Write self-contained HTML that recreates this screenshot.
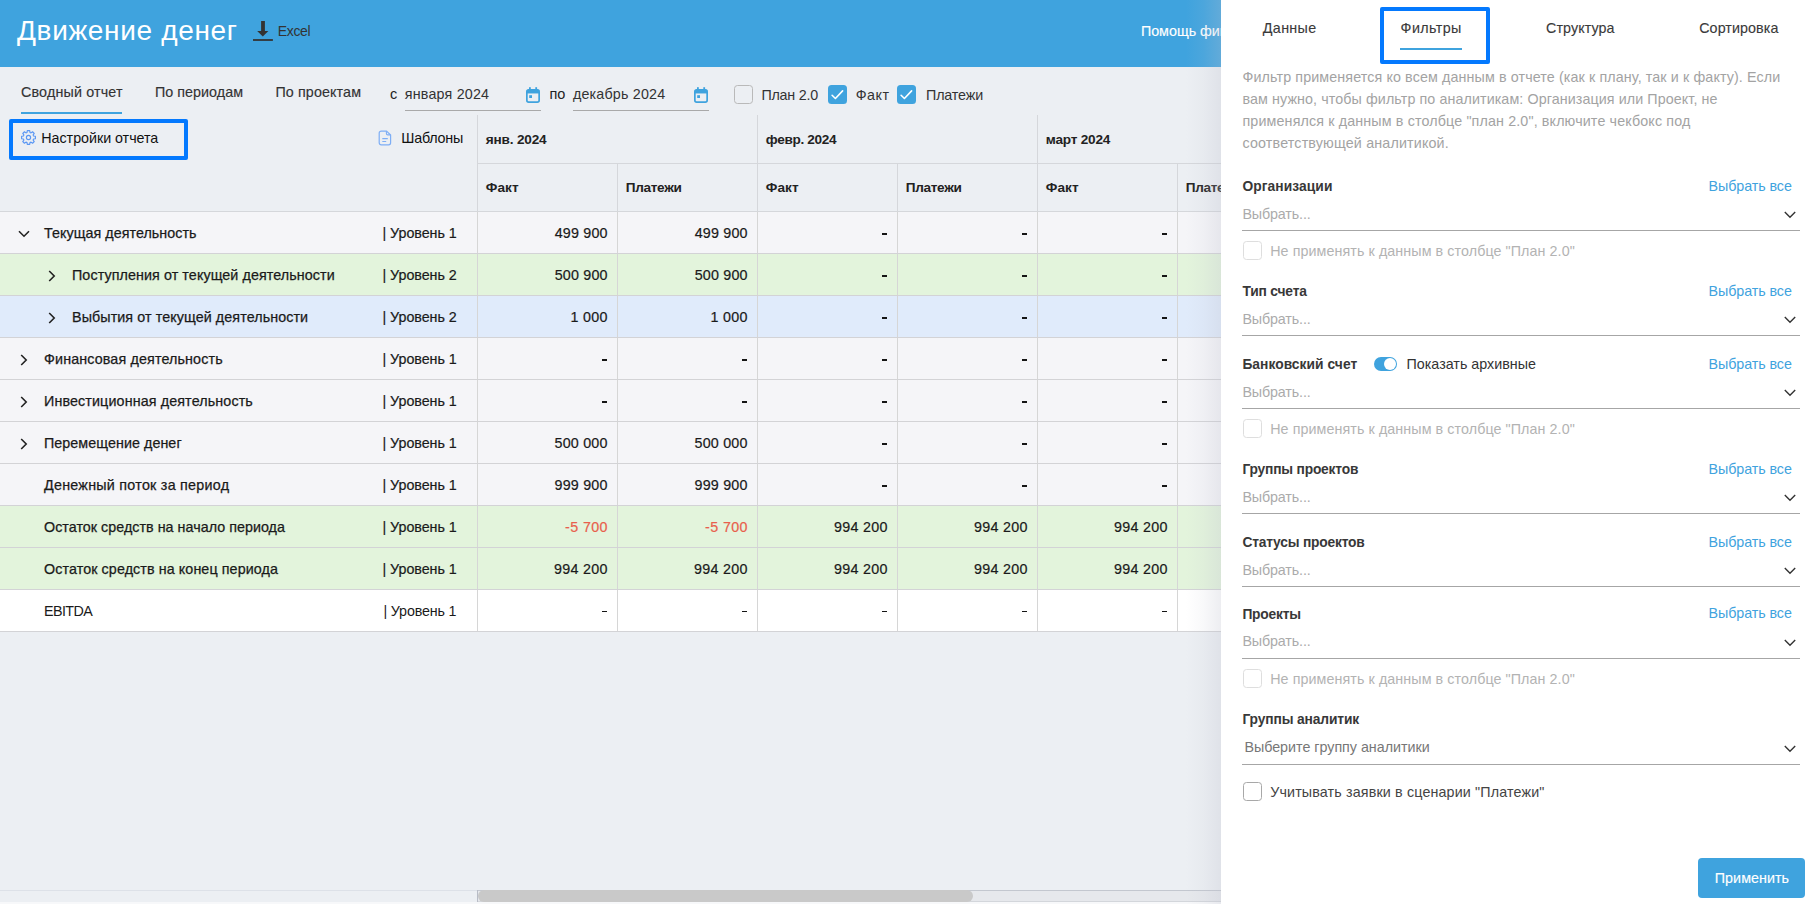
<!DOCTYPE html>
<html><head><meta charset="utf-8"><style>
html,body{margin:0;padding:0;width:1812px;height:904px;overflow:hidden;background:#eceff3;}
.t{position:absolute;white-space:nowrap;font-family:"Liberation Sans", sans-serif;}
.r{position:absolute;}
</style></head><body>
<div class='r' style='left:0px;top:0px;width:1812px;height:904px;background:#eceff3;'></div>
<div class='r' style='left:0px;top:0px;width:1221px;height:67px;background:#3fa3de;'></div>
<div class='t' style='left:17px;top:17.40px;font-size:28px;line-height:28px;color:#fff;font-weight:400;letter-spacing:0.661px;'>Движение денег</div>
<svg class='r' style='left:252px;top:20px' width='22' height='22' viewBox='0 0 22 22'>
<rect x='9.1' y='1' width='3.8' height='10.5' fill='#333'/>
<path d='M5.2 11 L16.4 11 L10.8 16.6 Z' fill='#333'/>
<rect x='1' y='19.1' width='19.9' height='1.8' fill='#333'/></svg>
<div class='t' style='left:277.8px;top:23.90px;font-size:14px;line-height:14px;color:#333;font-weight:400;letter-spacing:-0.359px;'>Excel</div>
<div class='t' style='left:1140.9px;top:23.84px;font-size:14.3px;line-height:14.3px;color:#fff;font-weight:400;-webkit-text-stroke:0.15px #fff;'>Помощь финансовому директору</div>
<div class='t' style='left:21px;top:85.14px;font-size:14.3px;line-height:14.3px;color:#333;font-weight:400;-webkit-text-stroke:0.15px #333;letter-spacing:0.164px;'>Сводный отчет</div>
<div class='t' style='left:155px;top:85.14px;font-size:14.3px;line-height:14.3px;color:#333;font-weight:400;-webkit-text-stroke:0.15px #333;letter-spacing:0.041px;'>По периодам</div>
<div class='t' style='left:275.4px;top:85.14px;font-size:14.3px;line-height:14.3px;color:#333;font-weight:400;-webkit-text-stroke:0.15px #333;letter-spacing:0.121px;'>По проектам</div>
<div class='r' style='left:21px;top:112px;width:101px;height:2px;background:#3fa3de;'></div>
<div class='t' style='left:390px;top:87.08px;font-size:14.5px;line-height:14.5px;color:#222;font-weight:400;'>с</div>
<div class='t' style='left:404.8px;top:87.25px;font-size:14.3px;line-height:14.3px;color:#333;font-weight:400;letter-spacing:0.186px;'>января 2024</div>
<div class='t' style='left:549.4px;top:87.08px;font-size:14.5px;line-height:14.5px;color:#222;font-weight:400;'>по</div>
<div class='t' style='left:572.9px;top:87.25px;font-size:14.3px;line-height:14.3px;color:#333;font-weight:400;letter-spacing:0.192px;'>декабрь 2024</div>
<div class='r' style='left:405px;top:110px;width:136px;height:1px;background:#a9a9a9;'></div>
<div class='r' style='left:573px;top:110px;width:136px;height:1px;background:#a9a9a9;'></div>
<svg class='r' style='left:526px;top:87px' width='15' height='16' viewBox='0 0 15 16'>
<rect x='0.85' y='2.85' width='12.3' height='12.3' rx='1.8' fill='none' stroke='#3fa3de' stroke-width='1.7'/>
<rect x='0.85' y='2.85' width='12.3' height='3.6' fill='#3fa3de'/>
<rect x='3' y='0.2' width='1.8' height='3.5' fill='#3fa3de'/><rect x='9.3' y='0.2' width='1.8' height='3.5' fill='#3fa3de'/>
<rect x='3.2' y='8.2' width='2.8' height='2.8' fill='#3fa3de'/></svg>
<svg class='r' style='left:694px;top:87px' width='15' height='16' viewBox='0 0 15 16'>
<rect x='0.85' y='2.85' width='12.3' height='12.3' rx='1.8' fill='none' stroke='#3fa3de' stroke-width='1.7'/>
<rect x='0.85' y='2.85' width='12.3' height='3.6' fill='#3fa3de'/>
<rect x='3' y='0.2' width='1.8' height='3.5' fill='#3fa3de'/><rect x='9.3' y='0.2' width='1.8' height='3.5' fill='#3fa3de'/>
<rect x='3.2' y='8.2' width='2.8' height='2.8' fill='#3fa3de'/></svg>
<div class='r' style='left:733.6px;top:85.4px;width:19px;height:19px;background:transparent;box-sizing:border-box;border:1.7px solid #b9b9b9;border-radius:3.5px;'></div>
<div class='t' style='left:761.4px;top:88.34px;font-size:14.3px;line-height:14.3px;color:#333;font-weight:400;letter-spacing:-0.23px;'>План 2.0</div>
<svg class='r' style='left:827.5px;top:85.3px' width='19' height='19' viewBox='0 0 19 19'>
<rect x='0' y='0' width='19' height='19' rx='3.5' fill='#3fa3de'/>
<path d='M4.1 10.3 L7.4 13.5 L14.6 5.9' stroke='#fff' stroke-width='1.6' fill='none' stroke-linecap='round' stroke-linejoin='round'/></svg>
<div class='t' style='left:855.7px;top:88.34px;font-size:14.3px;line-height:14.3px;color:#333;font-weight:400;letter-spacing:0.501px;'>Факт</div>
<svg class='r' style='left:897.4px;top:85.3px' width='19' height='19' viewBox='0 0 19 19'>
<rect x='0' y='0' width='19' height='19' rx='3.5' fill='#3fa3de'/>
<path d='M4.1 10.3 L7.4 13.5 L14.6 5.9' stroke='#fff' stroke-width='1.6' fill='none' stroke-linecap='round' stroke-linejoin='round'/></svg>
<div class='t' style='left:926px;top:88.34px;font-size:14.3px;line-height:14.3px;color:#333;font-weight:400;letter-spacing:-0.131px;'>Платежи</div>
<div class='r' style='left:9px;top:119px;width:179px;height:41px;background:transparent;box-sizing:border-box;border:4px solid #0479fe;border-radius:2px;'></div>
<svg class='r' style='left:20px;top:129px' width='17' height='17' viewBox='0 0 17 17'>
<path fill='none' stroke='#5b97f3' stroke-width='1.15' stroke-linejoin='round' d='M7.02 3.41 L7.30 1.60 L9.70 1.60 L9.98 3.41 L11.05 3.86 L12.53 2.77 L14.23 4.47 L13.14 5.95 L13.59 7.02 L15.40 7.30 L15.40 9.70 L13.59 9.98 L13.14 11.05 L14.23 12.53 L12.53 14.23 L11.05 13.14 L9.98 13.59 L9.70 15.40 L7.30 15.40 L7.02 13.59 L5.95 13.14 L4.47 14.23 L2.77 12.53 L3.86 11.05 L3.41 9.98 L1.60 9.70 L1.60 7.30 L3.41 7.02 L3.86 5.95 L2.77 4.47 L4.47 2.77 L5.95 3.86 Z'/>
<circle cx='8.5' cy='8.5' r='2.1' fill='none' stroke='#5b97f3' stroke-width='1.15'/></svg>
<div class='t' style='left:41.3px;top:131.25px;font-size:14.3px;line-height:14.3px;color:#111;font-weight:400;letter-spacing:-0.035px;'>Настройки отчета</div>
<svg class='r' style='left:378px;top:130px' width='14' height='16' viewBox='0 0 14 16'>
<path d='M3.2 1.1 H8.6 L12.6 5 V12.8 A2 2 0 0 1 10.6 14.8 H3.2 A2 2 0 0 1 1.2 12.8 V3.1 A2 2 0 0 1 3.2 1.1 Z' fill='none' stroke='#7eaef5' stroke-width='1.2' stroke-linejoin='round'/>
<path d='M8.4 1.3 V3.6 A1.3 1.3 0 0 0 9.7 4.9 H12.4' fill='none' stroke='#7eaef5' stroke-width='1.1'/>
<path d='M4.3 8.6 H9.8 M4.3 11.5 H8.2' stroke='#7eaef5' stroke-width='1.1'/></svg>
<div class='t' style='left:401.3px;top:131.34px;font-size:14.3px;line-height:14.3px;color:#111;font-weight:400;letter-spacing:-0.222px;'>Шаблоны</div>
<div class='r' style='left:477px;top:115px;width:1px;height:96px;background:#d5d7db;'></div>
<div class='r' style='left:757px;top:115px;width:1px;height:96px;background:#d5d7db;'></div>
<div class='r' style='left:1037px;top:115px;width:1px;height:96px;background:#d5d7db;'></div>
<div class='r' style='left:617px;top:163px;width:1px;height:48px;background:#d5d7db;'></div>
<div class='r' style='left:897px;top:163px;width:1px;height:48px;background:#d5d7db;'></div>
<div class='r' style='left:1177px;top:163px;width:1px;height:48px;background:#d5d7db;'></div>
<div class='r' style='left:477px;top:163px;width:744px;height:1px;background:#d5d7db;'></div>
<div class='r' style='left:0px;top:211px;width:1221px;height:1px;background:#d5d7db;'></div>
<div class='t' style='left:485.8px;top:132.94px;font-size:13.6px;line-height:13.6px;color:#222;font-weight:700;letter-spacing:-0.187px;'>янв. 2024</div>
<div class='t' style='left:765.8px;top:132.94px;font-size:13.6px;line-height:13.6px;color:#222;font-weight:700;letter-spacing:-0.337px;'>февр. 2024</div>
<div class='t' style='left:1045.8px;top:132.94px;font-size:13.6px;line-height:13.6px;color:#222;font-weight:700;letter-spacing:-0.206px;'>март 2024</div>
<div class='t' style='left:485.8px;top:181.04px;font-size:13.6px;line-height:13.6px;color:#222;font-weight:700;letter-spacing:0.058px;'>Факт</div>
<div class='t' style='left:625.8px;top:181.04px;font-size:13.6px;line-height:13.6px;color:#222;font-weight:700;letter-spacing:-0.333px;'>Платежи</div>
<div class='t' style='left:765.8px;top:181.04px;font-size:13.6px;line-height:13.6px;color:#222;font-weight:700;letter-spacing:0.058px;'>Факт</div>
<div class='t' style='left:905.8px;top:181.04px;font-size:13.6px;line-height:13.6px;color:#222;font-weight:700;letter-spacing:-0.333px;'>Платежи</div>
<div class='t' style='left:1045.8px;top:181.04px;font-size:13.6px;line-height:13.6px;color:#222;font-weight:700;letter-spacing:0.058px;'>Факт</div>
<div class='t' style='left:1185.8px;top:181.04px;font-size:13.6px;line-height:13.6px;color:#222;font-weight:700;letter-spacing:-0.333px;'>Платежи</div>
<div class='r' style='left:0px;top:212px;width:1221px;height:41px;background:#f5f5f8;'></div>
<div class='r' style='left:0px;top:253px;width:1221px;height:1px;background:#d3d3d6;'></div>
<div class='r' style='left:477px;top:212px;width:1px;height:41px;background:#d6d6d6;'></div>
<div class='r' style='left:617px;top:212px;width:1px;height:41px;background:#d6d6d6;'></div>
<div class='r' style='left:757px;top:212px;width:1px;height:41px;background:#d6d6d6;'></div>
<div class='r' style='left:897px;top:212px;width:1px;height:41px;background:#d6d6d6;'></div>
<div class='r' style='left:1037px;top:212px;width:1px;height:41px;background:#d6d6d6;'></div>
<div class='r' style='left:1177px;top:212px;width:1px;height:41px;background:#d6d6d6;'></div>
<div class='t' style='left:44px;top:225.84px;font-size:14.3px;line-height:14.3px;color:#1a1a1a;font-weight:400;-webkit-text-stroke:0.25px #1a1a1a;letter-spacing:0.049px;'>Текущая деятельность</div>
<div class='t' style='left:382.5px;top:225.84px;font-size:14.3px;line-height:14.3px;color:#1a1a1a;font-weight:400;-webkit-text-stroke:0.2px #1a1a1a;letter-spacing:-0.049px;'>| Уровень 1</div>
<svg class='r' style='left:18px;top:230px' width='12' height='8' viewBox='0 0 12 8'><path d='M1 1.2 L6 6.2 L11 1.2' stroke='#222' stroke-width='1.6' fill='none'/></svg>
<div class='t' style='right:1204.5px;top:225.84px;font-size:14.3px;line-height:14.3px;color:#1a1a1a;font-weight:400;-webkit-text-stroke:0.2px #1a1a1a;letter-spacing:0.185px;margin-right:-0.185px;'>499 900</div>
<div class='t' style='right:1064.5px;top:225.84px;font-size:14.3px;line-height:14.3px;color:#1a1a1a;font-weight:400;-webkit-text-stroke:0.2px #1a1a1a;letter-spacing:0.185px;margin-right:-0.185px;'>499 900</div>
<div class='r' style='left:882.4px;top:233px;width:5.1px;height:2px;background:#151515;'></div>
<div class='r' style='left:1022.4px;top:233px;width:5.1px;height:2px;background:#151515;'></div>
<div class='r' style='left:1162.4px;top:233px;width:5.1px;height:2px;background:#151515;'></div>
<div class='r' style='left:0px;top:254px;width:1221px;height:41px;background:#e3f4dc;'></div>
<div class='r' style='left:0px;top:295px;width:1221px;height:1px;background:#d3d3d6;'></div>
<div class='r' style='left:477px;top:254px;width:1px;height:41px;background:#d6d6d6;'></div>
<div class='r' style='left:617px;top:254px;width:1px;height:41px;background:#d6d6d6;'></div>
<div class='r' style='left:757px;top:254px;width:1px;height:41px;background:#d6d6d6;'></div>
<div class='r' style='left:897px;top:254px;width:1px;height:41px;background:#d6d6d6;'></div>
<div class='r' style='left:1037px;top:254px;width:1px;height:41px;background:#d6d6d6;'></div>
<div class='r' style='left:1177px;top:254px;width:1px;height:41px;background:#d6d6d6;'></div>
<div class='t' style='left:72px;top:267.85px;font-size:14.3px;line-height:14.3px;color:#1a1a1a;font-weight:400;-webkit-text-stroke:0.25px #1a1a1a;letter-spacing:0.09px;'>Поступления от текущей деятельности</div>
<div class='t' style='left:382.5px;top:267.85px;font-size:14.3px;line-height:14.3px;color:#1a1a1a;font-weight:400;-webkit-text-stroke:0.2px #1a1a1a;letter-spacing:-0.049px;'>| Уровень 2</div>
<svg class='r' style='left:48px;top:270px' width='8' height='12' viewBox='0 0 8 12'><path d='M1.2 1 L6.2 6 L1.2 11' stroke='#222' stroke-width='1.6' fill='none'/></svg>
<div class='t' style='right:1204.5px;top:267.85px;font-size:14.3px;line-height:14.3px;color:#1a1a1a;font-weight:400;-webkit-text-stroke:0.2px #1a1a1a;letter-spacing:0.185px;margin-right:-0.185px;'>500 900</div>
<div class='t' style='right:1064.5px;top:267.85px;font-size:14.3px;line-height:14.3px;color:#1a1a1a;font-weight:400;-webkit-text-stroke:0.2px #1a1a1a;letter-spacing:0.185px;margin-right:-0.185px;'>500 900</div>
<div class='r' style='left:882.4px;top:275px;width:5.1px;height:2px;background:#151515;'></div>
<div class='r' style='left:1022.4px;top:275px;width:5.1px;height:2px;background:#151515;'></div>
<div class='r' style='left:1162.4px;top:275px;width:5.1px;height:2px;background:#151515;'></div>
<div class='r' style='left:0px;top:296px;width:1221px;height:41px;background:#e0ebfb;'></div>
<div class='r' style='left:0px;top:337px;width:1221px;height:1px;background:#d3d3d6;'></div>
<div class='r' style='left:477px;top:296px;width:1px;height:41px;background:#d6d6d6;'></div>
<div class='r' style='left:617px;top:296px;width:1px;height:41px;background:#d6d6d6;'></div>
<div class='r' style='left:757px;top:296px;width:1px;height:41px;background:#d6d6d6;'></div>
<div class='r' style='left:897px;top:296px;width:1px;height:41px;background:#d6d6d6;'></div>
<div class='r' style='left:1037px;top:296px;width:1px;height:41px;background:#d6d6d6;'></div>
<div class='r' style='left:1177px;top:296px;width:1px;height:41px;background:#d6d6d6;'></div>
<div class='t' style='left:72px;top:309.85px;font-size:14.3px;line-height:14.3px;color:#1a1a1a;font-weight:400;-webkit-text-stroke:0.25px #1a1a1a;letter-spacing:0.092px;'>Выбытия от текущей деятельности</div>
<div class='t' style='left:382.5px;top:309.85px;font-size:14.3px;line-height:14.3px;color:#1a1a1a;font-weight:400;-webkit-text-stroke:0.2px #1a1a1a;letter-spacing:-0.049px;'>| Уровень 2</div>
<svg class='r' style='left:48px;top:312px' width='8' height='12' viewBox='0 0 8 12'><path d='M1.2 1 L6.2 6 L1.2 11' stroke='#222' stroke-width='1.6' fill='none'/></svg>
<div class='t' style='right:1204.5px;top:309.85px;font-size:14.3px;line-height:14.3px;color:#1a1a1a;font-weight:400;-webkit-text-stroke:0.2px #1a1a1a;letter-spacing:0.305px;margin-right:-0.305px;'>1 000</div>
<div class='t' style='right:1064.5px;top:309.85px;font-size:14.3px;line-height:14.3px;color:#1a1a1a;font-weight:400;-webkit-text-stroke:0.2px #1a1a1a;letter-spacing:0.305px;margin-right:-0.305px;'>1 000</div>
<div class='r' style='left:882.4px;top:317px;width:5.1px;height:2px;background:#151515;'></div>
<div class='r' style='left:1022.4px;top:317px;width:5.1px;height:2px;background:#151515;'></div>
<div class='r' style='left:1162.4px;top:317px;width:5.1px;height:2px;background:#151515;'></div>
<div class='r' style='left:0px;top:338px;width:1221px;height:41px;background:#f5f5f8;'></div>
<div class='r' style='left:0px;top:379px;width:1221px;height:1px;background:#d3d3d6;'></div>
<div class='r' style='left:477px;top:338px;width:1px;height:41px;background:#d6d6d6;'></div>
<div class='r' style='left:617px;top:338px;width:1px;height:41px;background:#d6d6d6;'></div>
<div class='r' style='left:757px;top:338px;width:1px;height:41px;background:#d6d6d6;'></div>
<div class='r' style='left:897px;top:338px;width:1px;height:41px;background:#d6d6d6;'></div>
<div class='r' style='left:1037px;top:338px;width:1px;height:41px;background:#d6d6d6;'></div>
<div class='r' style='left:1177px;top:338px;width:1px;height:41px;background:#d6d6d6;'></div>
<div class='t' style='left:44px;top:351.85px;font-size:14.3px;line-height:14.3px;color:#1a1a1a;font-weight:400;-webkit-text-stroke:0.25px #1a1a1a;letter-spacing:0.135px;'>Финансовая деятельность</div>
<div class='t' style='left:382.5px;top:351.85px;font-size:14.3px;line-height:14.3px;color:#1a1a1a;font-weight:400;-webkit-text-stroke:0.2px #1a1a1a;letter-spacing:-0.049px;'>| Уровень 1</div>
<svg class='r' style='left:20px;top:354px' width='8' height='12' viewBox='0 0 8 12'><path d='M1.2 1 L6.2 6 L1.2 11' stroke='#222' stroke-width='1.6' fill='none'/></svg>
<div class='r' style='left:602.4px;top:359px;width:5.1px;height:2px;background:#151515;'></div>
<div class='r' style='left:742.4px;top:359px;width:5.1px;height:2px;background:#151515;'></div>
<div class='r' style='left:882.4px;top:359px;width:5.1px;height:2px;background:#151515;'></div>
<div class='r' style='left:1022.4px;top:359px;width:5.1px;height:2px;background:#151515;'></div>
<div class='r' style='left:1162.4px;top:359px;width:5.1px;height:2px;background:#151515;'></div>
<div class='r' style='left:0px;top:380px;width:1221px;height:41px;background:#f5f5f8;'></div>
<div class='r' style='left:0px;top:421px;width:1221px;height:1px;background:#d3d3d6;'></div>
<div class='r' style='left:477px;top:380px;width:1px;height:41px;background:#d6d6d6;'></div>
<div class='r' style='left:617px;top:380px;width:1px;height:41px;background:#d6d6d6;'></div>
<div class='r' style='left:757px;top:380px;width:1px;height:41px;background:#d6d6d6;'></div>
<div class='r' style='left:897px;top:380px;width:1px;height:41px;background:#d6d6d6;'></div>
<div class='r' style='left:1037px;top:380px;width:1px;height:41px;background:#d6d6d6;'></div>
<div class='r' style='left:1177px;top:380px;width:1px;height:41px;background:#d6d6d6;'></div>
<div class='t' style='left:44px;top:393.85px;font-size:14.3px;line-height:14.3px;color:#1a1a1a;font-weight:400;-webkit-text-stroke:0.25px #1a1a1a;letter-spacing:0.126px;'>Инвестиционная деятельность</div>
<div class='t' style='left:382.5px;top:393.85px;font-size:14.3px;line-height:14.3px;color:#1a1a1a;font-weight:400;-webkit-text-stroke:0.2px #1a1a1a;letter-spacing:-0.049px;'>| Уровень 1</div>
<svg class='r' style='left:20px;top:396px' width='8' height='12' viewBox='0 0 8 12'><path d='M1.2 1 L6.2 6 L1.2 11' stroke='#222' stroke-width='1.6' fill='none'/></svg>
<div class='r' style='left:602.4px;top:401px;width:5.1px;height:2px;background:#151515;'></div>
<div class='r' style='left:742.4px;top:401px;width:5.1px;height:2px;background:#151515;'></div>
<div class='r' style='left:882.4px;top:401px;width:5.1px;height:2px;background:#151515;'></div>
<div class='r' style='left:1022.4px;top:401px;width:5.1px;height:2px;background:#151515;'></div>
<div class='r' style='left:1162.4px;top:401px;width:5.1px;height:2px;background:#151515;'></div>
<div class='r' style='left:0px;top:422px;width:1221px;height:41px;background:#f5f5f8;'></div>
<div class='r' style='left:0px;top:463px;width:1221px;height:1px;background:#d3d3d6;'></div>
<div class='r' style='left:477px;top:422px;width:1px;height:41px;background:#d6d6d6;'></div>
<div class='r' style='left:617px;top:422px;width:1px;height:41px;background:#d6d6d6;'></div>
<div class='r' style='left:757px;top:422px;width:1px;height:41px;background:#d6d6d6;'></div>
<div class='r' style='left:897px;top:422px;width:1px;height:41px;background:#d6d6d6;'></div>
<div class='r' style='left:1037px;top:422px;width:1px;height:41px;background:#d6d6d6;'></div>
<div class='r' style='left:1177px;top:422px;width:1px;height:41px;background:#d6d6d6;'></div>
<div class='t' style='left:44px;top:435.85px;font-size:14.3px;line-height:14.3px;color:#1a1a1a;font-weight:400;-webkit-text-stroke:0.25px #1a1a1a;letter-spacing:0.061px;'>Перемещение денег</div>
<div class='t' style='left:382.5px;top:435.85px;font-size:14.3px;line-height:14.3px;color:#1a1a1a;font-weight:400;-webkit-text-stroke:0.2px #1a1a1a;letter-spacing:-0.049px;'>| Уровень 1</div>
<svg class='r' style='left:20px;top:438px' width='8' height='12' viewBox='0 0 8 12'><path d='M1.2 1 L6.2 6 L1.2 11' stroke='#222' stroke-width='1.6' fill='none'/></svg>
<div class='t' style='right:1204.5px;top:435.85px;font-size:14.3px;line-height:14.3px;color:#1a1a1a;font-weight:400;-webkit-text-stroke:0.2px #1a1a1a;letter-spacing:0.219px;margin-right:-0.219px;'>500 000</div>
<div class='t' style='right:1064.5px;top:435.85px;font-size:14.3px;line-height:14.3px;color:#1a1a1a;font-weight:400;-webkit-text-stroke:0.2px #1a1a1a;letter-spacing:0.219px;margin-right:-0.219px;'>500 000</div>
<div class='r' style='left:882.4px;top:443px;width:5.1px;height:2px;background:#151515;'></div>
<div class='r' style='left:1022.4px;top:443px;width:5.1px;height:2px;background:#151515;'></div>
<div class='r' style='left:1162.4px;top:443px;width:5.1px;height:2px;background:#151515;'></div>
<div class='r' style='left:0px;top:464px;width:1221px;height:41px;background:#f5f5f8;'></div>
<div class='r' style='left:0px;top:505px;width:1221px;height:1px;background:#d3d3d6;'></div>
<div class='r' style='left:477px;top:464px;width:1px;height:41px;background:#d6d6d6;'></div>
<div class='r' style='left:617px;top:464px;width:1px;height:41px;background:#d6d6d6;'></div>
<div class='r' style='left:757px;top:464px;width:1px;height:41px;background:#d6d6d6;'></div>
<div class='r' style='left:897px;top:464px;width:1px;height:41px;background:#d6d6d6;'></div>
<div class='r' style='left:1037px;top:464px;width:1px;height:41px;background:#d6d6d6;'></div>
<div class='r' style='left:1177px;top:464px;width:1px;height:41px;background:#d6d6d6;'></div>
<div class='t' style='left:44px;top:477.85px;font-size:14.3px;line-height:14.3px;color:#1a1a1a;font-weight:400;-webkit-text-stroke:0.25px #1a1a1a;letter-spacing:0.259px;'>Денежный поток за период</div>
<div class='t' style='left:382.5px;top:477.85px;font-size:14.3px;line-height:14.3px;color:#1a1a1a;font-weight:400;-webkit-text-stroke:0.2px #1a1a1a;letter-spacing:-0.049px;'>| Уровень 1</div>
<div class='t' style='right:1204.5px;top:477.85px;font-size:14.3px;line-height:14.3px;color:#1a1a1a;font-weight:400;-webkit-text-stroke:0.2px #1a1a1a;letter-spacing:0.219px;margin-right:-0.219px;'>999 900</div>
<div class='t' style='right:1064.5px;top:477.85px;font-size:14.3px;line-height:14.3px;color:#1a1a1a;font-weight:400;-webkit-text-stroke:0.2px #1a1a1a;letter-spacing:0.219px;margin-right:-0.219px;'>999 900</div>
<div class='r' style='left:882.4px;top:485px;width:5.1px;height:2px;background:#151515;'></div>
<div class='r' style='left:1022.4px;top:485px;width:5.1px;height:2px;background:#151515;'></div>
<div class='r' style='left:1162.4px;top:485px;width:5.1px;height:2px;background:#151515;'></div>
<div class='r' style='left:0px;top:506px;width:1221px;height:41px;background:#e3f4dc;'></div>
<div class='r' style='left:0px;top:547px;width:1221px;height:1px;background:#d3d3d6;'></div>
<div class='r' style='left:477px;top:506px;width:1px;height:41px;background:#d6d6d6;'></div>
<div class='r' style='left:617px;top:506px;width:1px;height:41px;background:#d6d6d6;'></div>
<div class='r' style='left:757px;top:506px;width:1px;height:41px;background:#d6d6d6;'></div>
<div class='r' style='left:897px;top:506px;width:1px;height:41px;background:#d6d6d6;'></div>
<div class='r' style='left:1037px;top:506px;width:1px;height:41px;background:#d6d6d6;'></div>
<div class='r' style='left:1177px;top:506px;width:1px;height:41px;background:#d6d6d6;'></div>
<div class='t' style='left:44px;top:519.85px;font-size:14.3px;line-height:14.3px;color:#1a1a1a;font-weight:400;-webkit-text-stroke:0.25px #1a1a1a;letter-spacing:0.03px;'>Остаток средств на начало периода</div>
<div class='t' style='left:382.5px;top:519.85px;font-size:14.3px;line-height:14.3px;color:#1a1a1a;font-weight:400;-webkit-text-stroke:0.2px #1a1a1a;letter-spacing:-0.049px;'>| Уровень 1</div>
<div class='t' style='right:1204.5px;top:519.85px;font-size:14.3px;line-height:14.3px;color:#e8604c;font-weight:400;-webkit-text-stroke:0.2px #e8604c;letter-spacing:0.371px;margin-right:-0.371px;'>-5 700</div>
<div class='t' style='right:1064.5px;top:519.85px;font-size:14.3px;line-height:14.3px;color:#e8604c;font-weight:400;-webkit-text-stroke:0.2px #e8604c;letter-spacing:0.371px;margin-right:-0.371px;'>-5 700</div>
<div class='t' style='right:924.5px;top:519.85px;font-size:14.3px;line-height:14.3px;color:#1a1a1a;font-weight:400;-webkit-text-stroke:0.2px #1a1a1a;letter-spacing:0.302px;margin-right:-0.302px;'>994 200</div>
<div class='t' style='right:784.5px;top:519.85px;font-size:14.3px;line-height:14.3px;color:#1a1a1a;font-weight:400;-webkit-text-stroke:0.2px #1a1a1a;letter-spacing:0.302px;margin-right:-0.302px;'>994 200</div>
<div class='t' style='right:644.5px;top:519.85px;font-size:14.3px;line-height:14.3px;color:#1a1a1a;font-weight:400;-webkit-text-stroke:0.2px #1a1a1a;letter-spacing:0.302px;margin-right:-0.302px;'>994 200</div>
<div class='r' style='left:0px;top:548px;width:1221px;height:41px;background:#e3f4dc;'></div>
<div class='r' style='left:0px;top:589px;width:1221px;height:1px;background:#d3d3d6;'></div>
<div class='r' style='left:477px;top:548px;width:1px;height:41px;background:#d6d6d6;'></div>
<div class='r' style='left:617px;top:548px;width:1px;height:41px;background:#d6d6d6;'></div>
<div class='r' style='left:757px;top:548px;width:1px;height:41px;background:#d6d6d6;'></div>
<div class='r' style='left:897px;top:548px;width:1px;height:41px;background:#d6d6d6;'></div>
<div class='r' style='left:1037px;top:548px;width:1px;height:41px;background:#d6d6d6;'></div>
<div class='r' style='left:1177px;top:548px;width:1px;height:41px;background:#d6d6d6;'></div>
<div class='t' style='left:44px;top:561.85px;font-size:14.3px;line-height:14.3px;color:#1a1a1a;font-weight:400;-webkit-text-stroke:0.25px #1a1a1a;letter-spacing:0.095px;'>Остаток средств на конец периода</div>
<div class='t' style='left:382.5px;top:561.85px;font-size:14.3px;line-height:14.3px;color:#1a1a1a;font-weight:400;-webkit-text-stroke:0.2px #1a1a1a;letter-spacing:-0.049px;'>| Уровень 1</div>
<div class='t' style='right:1204.5px;top:561.85px;font-size:14.3px;line-height:14.3px;color:#1a1a1a;font-weight:400;-webkit-text-stroke:0.2px #1a1a1a;letter-spacing:0.302px;margin-right:-0.302px;'>994 200</div>
<div class='t' style='right:1064.5px;top:561.85px;font-size:14.3px;line-height:14.3px;color:#1a1a1a;font-weight:400;-webkit-text-stroke:0.2px #1a1a1a;letter-spacing:0.302px;margin-right:-0.302px;'>994 200</div>
<div class='t' style='right:924.5px;top:561.85px;font-size:14.3px;line-height:14.3px;color:#1a1a1a;font-weight:400;-webkit-text-stroke:0.2px #1a1a1a;letter-spacing:0.302px;margin-right:-0.302px;'>994 200</div>
<div class='t' style='right:784.5px;top:561.85px;font-size:14.3px;line-height:14.3px;color:#1a1a1a;font-weight:400;-webkit-text-stroke:0.2px #1a1a1a;letter-spacing:0.302px;margin-right:-0.302px;'>994 200</div>
<div class='t' style='right:644.5px;top:561.85px;font-size:14.3px;line-height:14.3px;color:#1a1a1a;font-weight:400;-webkit-text-stroke:0.2px #1a1a1a;letter-spacing:0.302px;margin-right:-0.302px;'>994 200</div>
<div class='r' style='left:0px;top:590px;width:1221px;height:41px;background:#ffffff;'></div>
<div class='r' style='left:0px;top:631px;width:1221px;height:1px;background:#d3d3d6;'></div>
<div class='r' style='left:477px;top:590px;width:1px;height:41px;background:#d6d6d6;'></div>
<div class='r' style='left:617px;top:590px;width:1px;height:41px;background:#d6d6d6;'></div>
<div class='r' style='left:757px;top:590px;width:1px;height:41px;background:#d6d6d6;'></div>
<div class='r' style='left:897px;top:590px;width:1px;height:41px;background:#d6d6d6;'></div>
<div class='r' style='left:1037px;top:590px;width:1px;height:41px;background:#d6d6d6;'></div>
<div class='r' style='left:1177px;top:590px;width:1px;height:41px;background:#d6d6d6;'></div>
<div class='t' style='left:44px;top:603.85px;font-size:14.3px;line-height:14.3px;color:#1a1a1a;font-weight:400;letter-spacing:-0.588px;'>EBITDA</div>
<div class='t' style='left:383.5px;top:603.85px;font-size:14.3px;line-height:14.3px;color:#1a1a1a;font-weight:400;letter-spacing:-0.169px;'>| Уровень 1</div>
<div class='r' style='left:602.4px;top:611px;width:5.1px;height:1px;background:#151515;'></div>
<div class='r' style='left:742.4px;top:611px;width:5.1px;height:1px;background:#151515;'></div>
<div class='r' style='left:882.4px;top:611px;width:5.1px;height:1px;background:#151515;'></div>
<div class='r' style='left:1022.4px;top:611px;width:5.1px;height:1px;background:#151515;'></div>
<div class='r' style='left:1162.4px;top:611px;width:5.1px;height:1px;background:#151515;'></div>
<div class='r' style='left:0px;top:890px;width:1221px;height:1px;background:#dde1e8;'></div>
<div class='r' style='left:477px;top:890px;width:1px;height:12px;background:#b8bcc6;'></div>
<div class='r' style='left:478px;top:890px;width:743px;height:12px;background:#e6e8ec;box-sizing:border-box;border-top:1px solid #c3c7cf;border-bottom:1px solid #d3d6db;'></div>
<div class='r' style='left:478px;top:890px;width:495px;height:12px;background:#c9c9c9;border-radius:6px;'></div>
<div class='r' style='left:0px;top:902px;width:1221px;height:2px;background:#f7f8fa;'></div>
<div class='r' style='left:1186px;top:0px;width:35px;height:904px;background:linear-gradient(to right, rgba(190,192,205,0), rgba(190,192,205,0.10) 50%, rgba(190,192,205,0.28));'></div>
<div class='r' style='left:1221px;top:0px;width:591px;height:904px;background:#fff;'></div>
<div class='t' style='left:1262.8px;top:20.95px;font-size:14.3px;line-height:14.3px;color:#3a3a3a;font-weight:400;-webkit-text-stroke:0.12px #3a3a3a;letter-spacing:0.349px;'>Данные</div>
<div class='t' style='left:1400.6px;top:20.95px;font-size:14.3px;line-height:14.3px;color:#3a3a3a;font-weight:400;-webkit-text-stroke:0.12px #3a3a3a;letter-spacing:0.415px;'>Фильтры</div>
<div class='t' style='left:1546px;top:20.95px;font-size:14.3px;line-height:14.3px;color:#3a3a3a;font-weight:400;-webkit-text-stroke:0.12px #3a3a3a;letter-spacing:0.084px;'>Структура</div>
<div class='t' style='left:1699.2px;top:20.95px;font-size:14.3px;line-height:14.3px;color:#3a3a3a;font-weight:400;-webkit-text-stroke:0.12px #3a3a3a;letter-spacing:0.081px;'>Сортировка</div>
<div class='r' style='left:1400px;top:48px;width:62px;height:2px;background:#3fa3de;'></div>
<div class='r' style='left:1380px;top:7px;width:110px;height:57px;background:transparent;box-sizing:border-box;border:4px solid #0479fe;border-radius:2px;'></div>
<div class='t' style='left:1242.5px;top:69.75px;font-size:14.3px;line-height:14.3px;color:#a3a3a3;font-weight:400;letter-spacing:0.111px;'>Фильтр применяется ко всем данным в отчете (как к плану, так и к факту). Если</div>
<div class='t' style='left:1242.5px;top:91.75px;font-size:14.3px;line-height:14.3px;color:#a3a3a3;font-weight:400;letter-spacing:0.089px;'>вам нужно, чтобы фильтр по аналитикам: Организация или Проект, не</div>
<div class='t' style='left:1242.5px;top:113.75px;font-size:14.3px;line-height:14.3px;color:#a3a3a3;font-weight:400;letter-spacing:0.133px;'>применялся к данным в столбце "план 2.0", включите чекбокс под</div>
<div class='t' style='left:1242.5px;top:135.75px;font-size:14.3px;line-height:14.3px;color:#a3a3a3;font-weight:400;letter-spacing:0.158px;'>соответствующей аналитикой.</div>
<div class='t' style='left:1242.4px;top:179.77px;font-size:13.8px;line-height:13.8px;color:#383838;font-weight:700;letter-spacing:0.08px;'>Организации</div>
<div class='t' style='right:20.09999999999991px;top:178.54px;font-size:14.3px;line-height:14.3px;color:#3fa3de;font-weight:400;letter-spacing:-0.079px;margin-right:0.079px;'>Выбрать все</div>
<div class='t' style='left:1242.4px;top:206.54px;font-size:14.3px;line-height:14.3px;color:#ababab;font-weight:400;letter-spacing:-0.124px;'>Выбрать...</div>
<svg class='r' style='left:1784px;top:211.2px' width='12' height='8' viewBox='0 0 12 8'><path d='M0.8 1 L6 6.2 L11.2 1' stroke='#333' stroke-width='1.4' fill='none'/></svg>
<div class='r' style='left:1242px;top:230.2px;width:558px;height:1px;background:#a6a6a6;'></div>
<div class='r' style='left:1242.5px;top:241.2px;width:19px;height:19px;background:transparent;box-sizing:border-box;border:1.5px solid #dedede;border-radius:3.5px;'></div>
<div class='t' style='left:1270.2px;top:243.84px;font-size:14.3px;line-height:14.3px;color:#b3b3b3;font-weight:400;letter-spacing:0.078px;'>Не применять к данным в столбце "План 2.0"</div>
<div class='t' style='left:1242.4px;top:284.87px;font-size:13.8px;line-height:13.8px;color:#383838;font-weight:700;letter-spacing:-0.152px;'>Тип счета</div>
<div class='t' style='right:20.09999999999991px;top:283.64px;font-size:14.3px;line-height:14.3px;color:#3fa3de;font-weight:400;letter-spacing:-0.079px;margin-right:0.079px;'>Выбрать все</div>
<div class='t' style='left:1242.4px;top:311.64px;font-size:14.3px;line-height:14.3px;color:#ababab;font-weight:400;letter-spacing:-0.124px;'>Выбрать...</div>
<svg class='r' style='left:1784px;top:316.3px' width='12' height='8' viewBox='0 0 12 8'><path d='M0.8 1 L6 6.2 L11.2 1' stroke='#333' stroke-width='1.4' fill='none'/></svg>
<div class='r' style='left:1242px;top:335.3px;width:558px;height:1px;background:#a6a6a6;'></div>
<div class='t' style='left:1242.4px;top:357.77px;font-size:13.8px;line-height:13.8px;color:#383838;font-weight:700;letter-spacing:0.045px;'>Банковский счет</div>
<div class='t' style='right:20.09999999999991px;top:356.54px;font-size:14.3px;line-height:14.3px;color:#3fa3de;font-weight:400;letter-spacing:-0.079px;margin-right:0.079px;'>Выбрать все</div>
<div class='t' style='left:1242.4px;top:384.54px;font-size:14.3px;line-height:14.3px;color:#ababab;font-weight:400;letter-spacing:-0.124px;'>Выбрать...</div>
<svg class='r' style='left:1784px;top:389.2px' width='12' height='8' viewBox='0 0 12 8'><path d='M0.8 1 L6 6.2 L11.2 1' stroke='#333' stroke-width='1.4' fill='none'/></svg>
<div class='r' style='left:1242px;top:408.2px;width:558px;height:1px;background:#a6a6a6;'></div>
<div class='r' style='left:1242.5px;top:419.2px;width:19px;height:19px;background:transparent;box-sizing:border-box;border:1.5px solid #dedede;border-radius:3.5px;'></div>
<div class='t' style='left:1270.2px;top:421.85px;font-size:14.3px;line-height:14.3px;color:#b3b3b3;font-weight:400;letter-spacing:0.078px;'>Не применять к данным в столбце "План 2.0"</div>
<div class='r' style='left:1374px;top:357px;width:23px;height:14px;border-radius:7px;background:#3fa3de'></div>
<div class='r' style='left:1384px;top:358px;width:12px;height:12px;border-radius:6px;background:#fff'></div>
<div class='t' style='left:1406.5px;top:356.54px;font-size:14.3px;line-height:14.3px;color:#333;font-weight:400;letter-spacing:0.01px;'>Показать архивные</div>
<div class='t' style='left:1242.4px;top:462.87px;font-size:13.8px;line-height:13.8px;color:#383838;font-weight:700;letter-spacing:-0.196px;'>Группы проектов</div>
<div class='t' style='right:20.09999999999991px;top:461.64px;font-size:14.3px;line-height:14.3px;color:#3fa3de;font-weight:400;letter-spacing:-0.079px;margin-right:0.079px;'>Выбрать все</div>
<div class='t' style='left:1242.4px;top:489.64px;font-size:14.3px;line-height:14.3px;color:#ababab;font-weight:400;letter-spacing:-0.124px;'>Выбрать...</div>
<svg class='r' style='left:1784px;top:494.3px' width='12' height='8' viewBox='0 0 12 8'><path d='M0.8 1 L6 6.2 L11.2 1' stroke='#333' stroke-width='1.4' fill='none'/></svg>
<div class='r' style='left:1242px;top:513.3px;width:558px;height:1px;background:#a6a6a6;'></div>
<div class='t' style='left:1242.4px;top:535.87px;font-size:13.8px;line-height:13.8px;color:#383838;font-weight:700;letter-spacing:-0.198px;'>Статусы проектов</div>
<div class='t' style='right:20.09999999999991px;top:534.64px;font-size:14.3px;line-height:14.3px;color:#3fa3de;font-weight:400;letter-spacing:-0.079px;margin-right:0.079px;'>Выбрать все</div>
<div class='t' style='left:1242.4px;top:562.64px;font-size:14.3px;line-height:14.3px;color:#ababab;font-weight:400;letter-spacing:-0.124px;'>Выбрать...</div>
<svg class='r' style='left:1784px;top:567.3px' width='12' height='8' viewBox='0 0 12 8'><path d='M0.8 1 L6 6.2 L11.2 1' stroke='#333' stroke-width='1.4' fill='none'/></svg>
<div class='r' style='left:1242px;top:586.3px;width:558px;height:1px;background:#a6a6a6;'></div>
<div class='t' style='left:1242.4px;top:607.67px;font-size:13.8px;line-height:13.8px;color:#383838;font-weight:700;letter-spacing:-0.198px;'>Проекты</div>
<div class='t' style='right:20.09999999999991px;top:606.45px;font-size:14.3px;line-height:14.3px;color:#3fa3de;font-weight:400;letter-spacing:-0.079px;margin-right:0.079px;'>Выбрать все</div>
<div class='t' style='left:1242.4px;top:634.45px;font-size:14.3px;line-height:14.3px;color:#ababab;font-weight:400;letter-spacing:-0.124px;'>Выбрать...</div>
<svg class='r' style='left:1784px;top:639.1px' width='12' height='8' viewBox='0 0 12 8'><path d='M0.8 1 L6 6.2 L11.2 1' stroke='#333' stroke-width='1.4' fill='none'/></svg>
<div class='r' style='left:1242px;top:658.1px;width:558px;height:1px;background:#a6a6a6;'></div>
<div class='r' style='left:1242.5px;top:669.1px;width:19px;height:19px;background:transparent;box-sizing:border-box;border:1.5px solid #dedede;border-radius:3.5px;'></div>
<div class='t' style='left:1270.2px;top:671.75px;font-size:14.3px;line-height:14.3px;color:#b3b3b3;font-weight:400;letter-spacing:0.078px;'>Не применять к данным в столбце "План 2.0"</div>
<div class='t' style='left:1242.4px;top:713.37px;font-size:13.8px;line-height:13.8px;color:#383838;font-weight:700;letter-spacing:-0.127px;'>Группы аналитик</div>
<div class='t' style='left:1244.4px;top:740.14px;font-size:14.3px;line-height:14.3px;color:#777;font-weight:400;letter-spacing:-0.017px;'>Выберите группу аналитики</div>
<svg class='r' style='left:1784px;top:744.8px' width='12' height='8' viewBox='0 0 12 8'><path d='M0.8 1 L6 6.2 L11.2 1' stroke='#333' stroke-width='1.4' fill='none'/></svg>
<div class='r' style='left:1242px;top:763.8px;width:558px;height:1px;background:#a6a6a6;'></div>
<div class='r' style='left:1242.5px;top:782.3px;width:19px;height:19px;background:transparent;box-sizing:border-box;border:1.6px solid #a8a8a8;border-radius:3.5px;'></div>
<div class='t' style='left:1270.2px;top:784.85px;font-size:14.3px;line-height:14.3px;color:#444;font-weight:400;letter-spacing:0.144px;'>Учитывать заявки в сценарии "Платежи"</div>
<div class='r' style='left:1698px;top:858px;width:107px;height:40px;background:#3fa3de;border-radius:4px;'></div>
<div class='t' style='left:1714.8px;top:870.85px;font-size:14.3px;line-height:14.3px;color:#fff;font-weight:400;-webkit-text-stroke:0.15px #fff;letter-spacing:0.041px;'>Применить</div>
</body></html>
